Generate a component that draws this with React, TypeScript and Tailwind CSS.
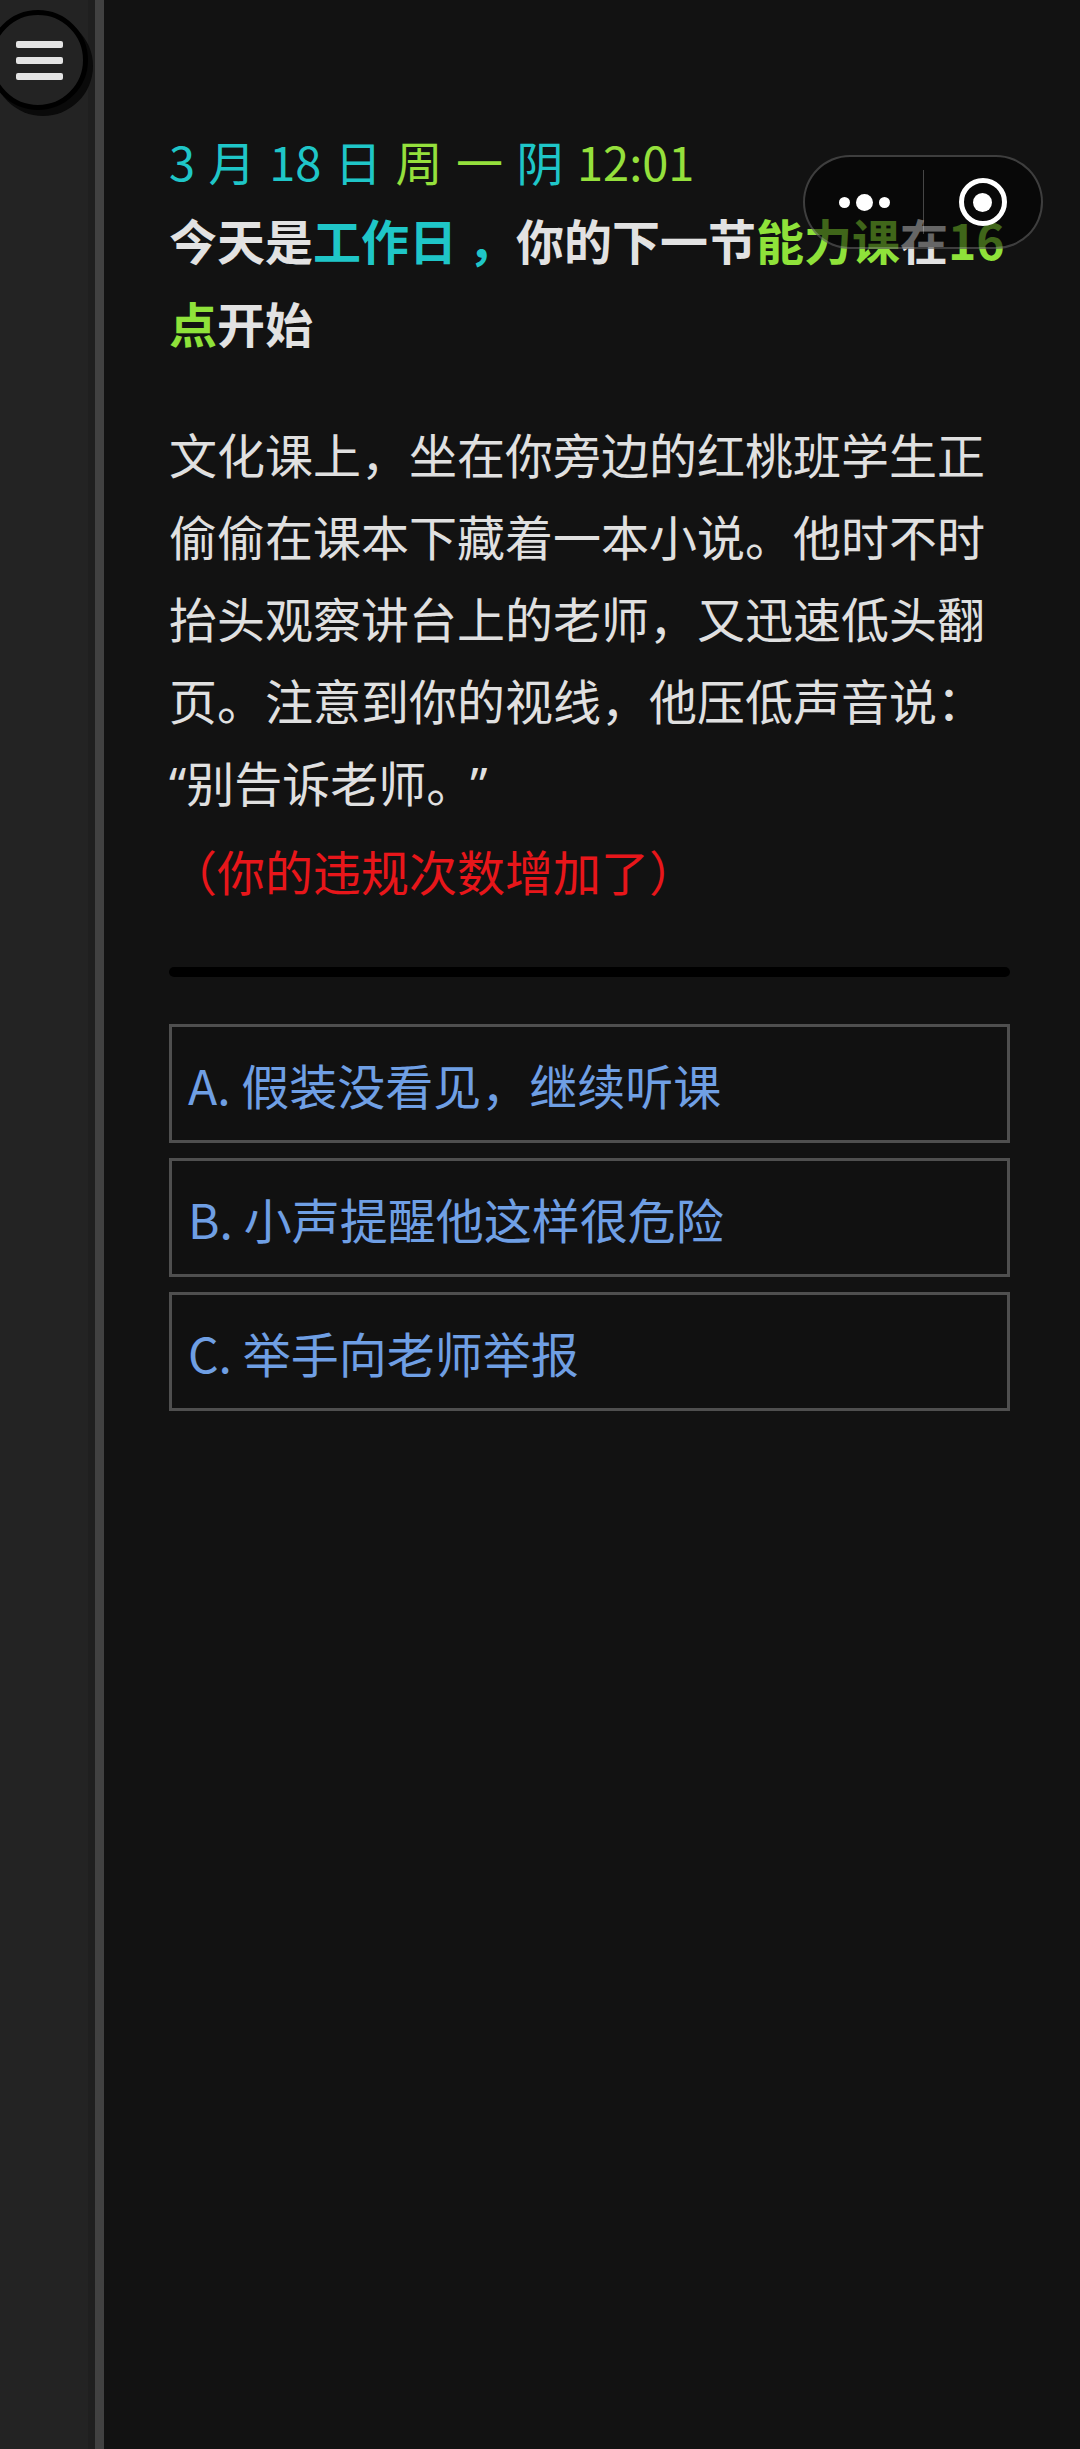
import React from "react";

export default function App() {
  const font = { fontFamily: '"Noto Sans CJK SC", "Noto Sans", sans-serif' };
  const latin = { fontFamily: '"Noto Sans", sans-serif' };
  return (
    <div className="relative flex min-h-[2449px] w-[1080px] bg-[#121212]" style={font}>
      {/* sidebar */}
      <div className="flex w-[104px] shrink-0">
        <div className="w-[88px] bg-[#232323]" />
        <div className="w-[7px] bg-[#1f1f1f]" />
        <div className="w-[9px] bg-[#414141]" />
      </div>

      {/* main */}
      <div className="flex-1 pl-[65px] pr-[70px] pt-[126px]">
        <div className="text-[47px] leading-[70px] whitespace-pre [word-spacing:3px]">
          <span className="text-[#1fc6c8]">3 月 18 日 </span>
          <span className="text-[#95e03c]">周 一 </span>
          <span className="text-[#1fc6c8]">阴 </span>
          <span className="text-[#95e03c]">12:01</span>
        </div>
        <div className="mt-[2px] text-[48px] font-bold leading-[83px] text-[#e2e2e2]">
          今天是<span className="text-[#1fc6c8]">工作日 ，</span>你的下一节
          <span className="text-[#8fe23a]">能力课</span>在<span className="text-[#8fe23a]">16点</span>开始
        </div>
        <div className="mt-[48px] text-[48px] leading-[82px] text-[#e0e0e0]">
          文化课上，坐在你旁边的红桃班学生正偷偷在课本下藏着一本小说。他时不时抬头观察讲台上的老师，又迅速低头翻页。注意到你的视线，他压低声音说：
          <br />
          <span style={latin}>“</span>别告诉老师。<span className="ml-[20px]" style={latin}>”</span>
          <div className="mt-[4px] text-[#e8161a]">（你的违规次数增加了）</div>
        </div>
        <div className="mt-[56px] h-[10px] rounded-full bg-black" />
        <div className="mt-[47px] flex flex-col gap-[15px]">
          {["A. 假装没看见，继续听课", "B. 小声提醒他这样很危险", "C. 举手向老师举报"].map((t) => (
            <div
              key={t}
              className="flex h-[119px] items-center border-[3px] border-[#4f4f4f] bg-[#111111] pl-[16px] text-[48px] text-[#6f9fe4]"
            >
              {t}
            </div>
          ))}
        </div>
      </div>

      {/* floating menu button */}
      <div className="absolute left-[-12px] top-[10px] flex h-[100px] w-[100px] items-center justify-center rounded-full border-[5px] border-black bg-[#232323] shadow-[5px_6px_0_#0a0a0a]">
        <div className="ml-[2px] flex flex-col gap-[9px]">
          <div className="h-[7px] w-[47px] rounded-[2px] bg-[#e4e4e4]" />
          <div className="h-[7px] w-[47px] rounded-[2px] bg-[#e4e4e4]" />
          <div className="h-[7px] w-[47px] rounded-[2px] bg-[#e4e4e4]" />
        </div>
      </div>

      {/* mini program capsule */}
      <div className="absolute left-[803px] top-[155px] flex h-[94px] w-[240px] items-center rounded-full border-[2px] border-[rgba(255,255,255,0.22)] bg-[rgba(0,0,0,0.55)]">
        <div className="flex w-[118px] items-center justify-center gap-[6px]">
          <div className="h-[11px] w-[11px] rounded-full bg-white" />
          <div className="h-[17px] w-[17px] rounded-full bg-white" />
          <div className="h-[11px] w-[11px] rounded-full bg-white" />
        </div>
        <div className="h-[64px] w-[1px] bg-[rgba(255,255,255,0.25)]" />
        <div className="flex flex-1 items-center justify-center">
          <div className="flex h-[48px] w-[48px] items-center justify-center rounded-full border-[5px] border-white">
            <div className="h-[19px] w-[19px] rounded-full bg-white" />
          </div>
        </div>
      </div>
    </div>
  );
}
